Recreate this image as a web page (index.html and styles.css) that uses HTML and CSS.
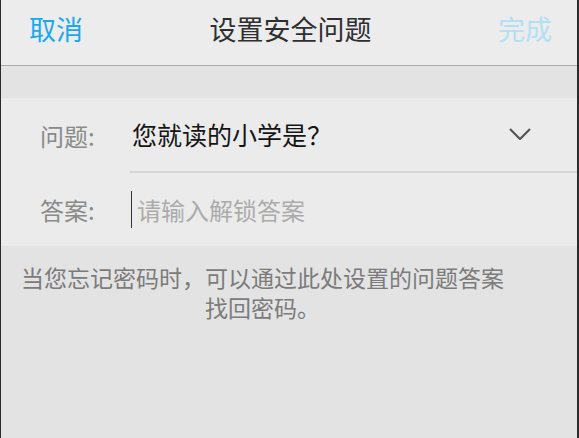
FILE: index.html
```html
<!DOCTYPE html>
<html lang="zh-CN">
  <head>
    <meta charset="UTF-8" />
    <meta name="viewport" content="width=device-width, initial-scale=1.0" />
    <title>设置安全问题</title>
    <link rel="stylesheet" href="styles.css">
  </head>
  <body>
    <div class="page">
      <div class="header">
        <span class="cancel">取消</span>
        <span class="title">设置安全问题</span>
        <span class="done">完成</span>
      </div>
      <div class="band"></div>
      <div class="form">
        <div class="row">
          <span class="label">问题:</span>
          <div class="field field-line">
            <span class="question">您就读的小学是？</span>
            <svg class="chevron" width="22" height="12" viewBox="0 0 22 12">
              <path d="M1 1 L11 11 L21 1" fill="none" stroke="#555" stroke-width="2.2" />
            </svg>
          </div>
        </div>
        <div class="row">
          <span class="label">答案:</span>
          <div class="field field-last">
            <span class="cursor"></span>
            <span class="placeholder">请输入解锁答案</span>
          </div>
        </div>
      </div>
      <p class="hint">当您忘记密码时，可以通过此处设置的问题答案找回密码。</p>
    </div>
  </body>
</html>
```

FILE: styles.css
```css
body {
  margin: 0;
  font-family: "Noto Sans CJK SC", "Noto Sans", sans-serif;
  background-color: #e3e3e3;
}
.page {
  height: 438px;
  box-sizing: border-box;
  border-left: 1px solid #2b2b2b;
  border-right: 2px solid #2b2b2b;
  background-color: #e3e3e3;
}
.header {
  height: 66px;
  border-bottom: 1px solid #a9a9a9;
  background-color: #ececec;
  display: flex;
  align-items: center;
  justify-content: space-between;
  padding: 0 25px 9px 28px;
  box-sizing: border-box;
  font-size: 27px;
}
.cancel {
  color: #1aa9ee;
}
.title {
  color: #2f2f2f;
}
.done {
  color: #b3e0f4;
}
.band {
  height: 32px;
}
.form {
  background-color: #ebebeb;
  padding-left: 39px;
}
.row {
  display: flex;
  align-items: stretch;
}
.label {
  width: 90px;
  font-size: 24px;
  color: #8a8a8a;
  display: flex;
  align-items: center;
}
.field {
  flex: 1;
  height: 75px;
  display: flex;
  align-items: center;
  font-size: 24px;
}
.field-line {
  border-bottom: 2px solid #d6d6d6;
  padding: 0 0 1px 2px;
  box-sizing: border-box;
}
.field-last {
  height: 73px;
}
.question {
  flex: 1;
  font-size: 25px;
  color: #151515;
}
.chevron {
  margin-right: 46px;
}
.cursor {
  width: 1px;
  height: 37px;
  background-color: #333;
  margin: 0 5px 0 1px;
}
.placeholder {
  color: #ababab;
}
.hint {
  margin: 0 0 0 19px;
  width: 485px;
  padding-top: 16px;
  text-align: center;
  font-size: 23px;
  line-height: 30px;
  color: #7b7b7b;
}
```
